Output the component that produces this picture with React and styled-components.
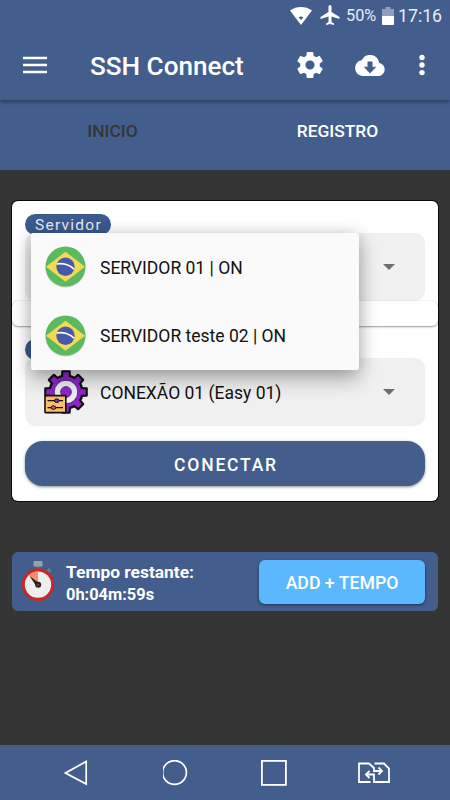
import React from "react";
import styled, { createGlobalStyle } from "styled-components";

const blue = "#435d8d";

const GlobalStyle = createGlobalStyle`
  * { box-sizing: border-box; }
  body { margin: 0; background: #353535; font-family: Roboto, sans-serif; }
  svg { display: block; flex: none; }
`;

const Screen = styled.div`
  width: 450px;
  height: 800px;
  display: flex;
  flex-direction: column;
  background: #353535;
  overflow: hidden;
`;

const StatusBar = styled.div`
  height: 32px;
  display: flex;
  align-items: center;
  justify-content: flex-end;
  padding-right: 8px;
  background: ${blue};
  color: #e8ecf4;
  position: relative;
  z-index: 2;
`;

const StatusText = styled.span`
  width: ${(p) => p.$width}px;
  margin-left: ${(p) => p.$gap}px;
  font-size: ${(p) => p.$size}px;
  line-height: 32px;
  white-space: nowrap;
`;

const StatusIcon = styled.svg`
  margin-left: ${(p) => p.$gap}px;
  margin-top: ${(p) => p.$drop || 0}px;
`;

const Toolbar = styled.header`
  height: 68px;
  display: flex;
  align-items: center;
  padding: 0 25px 0 23px;
  background: ${blue};
  box-shadow: 0 1px 4px rgba(0, 0, 0, 0.5);
  position: relative;
  z-index: 1;
`;

const MenuIcon = styled.svg`
  margin-top: -3px;
`;

const Title = styled.h1`
  flex: 1;
  margin: 0 0 0 43px;
  font-size: 26.1px;
  line-height: 68px;
  font-weight: 500;
  color: #fff;
  white-space: nowrap;
`;

const Actions = styled.div`
  display: flex;
  align-items: center;
  margin-top: -2px;
`;

const ActionIcon = styled.svg`
  margin-left: ${(p) => p.$gap || 0}px;
`;

const Tabs = styled.nav`
  height: 70px;
  display: grid;
  grid-template-columns: 1fr 1fr;
  background: ${blue};
`;

const Tab = styled.div`
  padding-top: 1px;
  text-align: center;
  font-size: 17.4px;
  line-height: 60px;
  font-weight: 500;
  color: ${(p) => (p.$active ? "#353535" : "#fff")};
`;

const Content = styled.main`
  flex: 1;
  padding: 31px 12px 0;
`;

const Card = styled.section`
  position: relative;
  height: 300px;
  border-radius: 6px;
  background: #fff;
  box-shadow: 0 0 0 1px #0a0a0a;
  padding-top: 13px;
`;

const Badge = styled.div`
  width: 86px;
  height: 21px;
  margin-left: 13px;
  border-radius: 11px;
  background: #3b5a8e;
  color: #e9edf5;
  font-size: 15.5px;
  line-height: 22px;
  letter-spacing: 1.25px;
  padding-left: 10px;
`;

const Field = styled.div`
  height: 68px;
  margin: -2px 13px 0;
  border-radius: 10px;
  background: #f0f0f0;
  display: flex;
  align-items: center;
  justify-content: flex-end;
  padding: 0 30px 0 19px;
`;

const FieldText = styled.span`
  flex: 1;
  margin-left: 12px;
  padding-top: 1px;
  font-size: 17.5px;
  color: #111;
  white-space: nowrap;
`;

const Strip = styled.div`
  height: 25px;
  margin: 0 0 13px;
  border-radius: 6px;
  background: #fff;
  box-shadow: 0 1px 2px rgba(0, 0, 0, 0.38), 0 0 1px rgba(0, 0, 0, 0.25);
`;

const ConnectButton = styled.button`
  display: block;
  width: 400px;
  height: 45px;
  margin: 15px 13px 0;
  padding: 2px 0 0 2px;
  border: 0;
  border-radius: 18px;
  background: ${blue};
  box-shadow: 0 1px 3px rgba(0, 0, 0, 0.45);
  color: #fff;
  font: 500 17.5px Roboto, sans-serif;
  letter-spacing: 1.8px;
`;

const Menu = styled.div`
  position: absolute;
  top: 32px;
  left: 19px;
  width: 328px;
  height: 137px;
  border-radius: 2px;
  background: #fafafa;
  box-shadow: 0 10px 20px rgba(0, 0, 0, 0.27), 0 0 15px rgba(0, 0, 0, 0.16);
`;

const MenuItem = styled.div`
  height: 68.5px;
  display: flex;
  align-items: center;
  padding-left: 14px;
`;

const MenuText = styled.span`
  margin-left: 14px;
  font-size: 17.5px;
  padding-top: 1px;
  color: #111;
  white-space: nowrap;
`;

const TimePanel = styled.section`
  height: 59px;
  margin-top: 51px;
  border-radius: 6px;
  background: ${blue};
  display: flex;
  align-items: center;
  padding: 0 13px 0 9px;
`;

const TimeText = styled.div`
  flex: 1;
  margin-left: 11px;
  padding-top: 3px;
  color: #fff;
  font-size: 17.4px;
  line-height: 23px;
  font-weight: 700;
`;

const TimeValue = styled.div`
  font-size: 16.4px;
  line-height: 22px;
`;

const AddButton = styled.button`
  width: 166px;
  height: 44px;
  padding: 2px 0 0;
  border: 0;
  border-radius: 6px;
  background: #5bb8ff;
  box-shadow: 0 1px 3px rgba(0, 0, 0, 0.5);
  color: #fff;
  font: 500 17.7px Roboto, sans-serif;
`;

const NavBar = styled.footer`
  height: 55px;
  display: flex;
  align-items: center;
  padding-left: 64px;
  background: ${blue};
`;

const NavIcon = styled.svg`
  margin-right: ${(p) => p.$gap || 0}px;
`;

const BrazilFlag = () => (
  <svg width="41" height="42" viewBox="0 0 41 42">
    <circle cx="20.5" cy="21.6" r="20" fill="#cbd3cc" />
    <circle cx="20.5" cy="20.6" r="20" fill="#5aba5e" />
    <path d="M1 20.8 20.5 5.8 40 20.8 20.5 35.8Z" fill="#f6d858" />
    <circle cx="20.5" cy="20.8" r="9.2" fill="#4759a9" />
    <path d="M12 18C18 16.8 25 18.8 29 23.3" fill="none" stroke="#fff" strokeWidth="1.7" />
  </svg>
);

const TEETH = [0, 45, 90, 135, 180, 225, 270, 315];

const ConnectionGear = () => (
  <svg width="44" height="44" viewBox="0 0 44 44">
    <g stroke="#101010" strokeWidth="2.4" strokeLinejoin="round" fill="#9124cf">
      {TEETH.map((a) => (
        <path key={a} d="M18.1 7 18.5 1.4H25.5L25.9 7Z" transform={`rotate(${a} 22 22)`} />
      ))}
      <circle cx="22" cy="22" r="16.4" />
    </g>
    <g fill="#9124cf">
      {TEETH.map((a) => (
        <path key={a} d="M18.9 9 19.4 2.4H24.6L25.1 9Z" transform={`rotate(${a} 22 22)`} />
      ))}
    </g>
    <circle cx="22" cy="22" r="11.8" fill="#ececf4" stroke="#3b1455" strokeWidth="0.8" />
    <circle cx="22" cy="22" r="5.4" fill="#9124cf" stroke="#3b1455" strokeWidth="0.7" />
    <rect x="1" y="25.6" width="20.8" height="17" rx="0.6" fill="#f9bf69" stroke="#101010" strokeWidth="1.6" />
    <path d="M3.5 30.7H19M3.5 37.6H19" stroke="#101010" strokeWidth="1.3" />
    <ellipse cx="12.8" cy="30.7" rx="2.4" ry="1.8" fill="#9124cf" stroke="#101010" strokeWidth="1" />
    <ellipse cx="9.4" cy="37.6" rx="2.4" ry="1.8" fill="#ed5437" stroke="#101010" strokeWidth="1" />
  </svg>
);

const Caret = () => (
  <svg width="12" height="6" viewBox="0 0 12 6">
    <path d="M0 0H12L6 6Z" fill="#6e6e6e" />
  </svg>
);

const Stopwatch = () => (
  <svg width="34" height="44" viewBox="0 0 34 44">
    <rect x="14.5" y="4" width="5" height="6" fill="#546f7a" />
    <rect x="12.5" y="1" width="9" height="5.5" rx="0.8" fill="#90a4ae" />
    <path d="m25.3 10.2 2.4-2.5 3 2.9-2.4 2.4Z" fill="#607d8b" />
    <circle cx="17" cy="24.6" r="16.3" fill="#c62828" />
    <circle cx="17" cy="24.6" r="13.2" fill="#eee" />
    <path d="M17 24.6 7.7 15.3A13.2 13.2 0 0 1 17 11.4Z" fill="#ff8a65" />
    <path d="m8.5 16.1 7.1 10.4 2.9-2.9Z" fill="#222" />
    <circle cx="17.2" cy="24.8" r="3" fill="#222" />
    <circle cx="17.2" cy="24.8" r="1" fill="#c62828" />
  </svg>
);

export default function App() {
  return (
    <Screen>
      <GlobalStyle />
      <StatusBar>
        <StatusIcon $drop={-1} width="22" height="18" viewBox="0 0 22 18">
          <path d="M0 3.4C6.5-1.1 15.5-1.1 22 3.4L11 18Z" fill="#fff" />
          <path d="M8.5 10.2Q11 8.8 13.5 10.2L11 13Z" fill={blue} />
        </StatusIcon>
        <StatusIcon $gap={8} $drop={-2} width="20" height="20" viewBox="2 2 20 20">
          <path d="M21.5 16v-2l-8-5V3.5a1.5 1.5 0 0 0-3 0V9l-8 5v2l8-2.5V19l-2.5 1.5V22l4-1 4 1v-1.5L13.5 19v-5.5Z" fill="#fff" />
        </StatusIcon>
        <StatusText $gap={6} $size={16.3} $width={31}>50%</StatusText>
        <StatusIcon $gap={5} $drop={-1} width="12" height="18" viewBox="0 0 12 18">
          <path d="M3.5 0H8.5V2H12V9H0V2H3.5Z" fill="#8d9dba" />
          <path d="M0 9H12V17Q12 18 11 18H1Q0 18 0 17Z" fill="#fff" />
        </StatusIcon>
        <StatusText $gap={4} $size={17.7} $width={44}>17:16</StatusText>
      </StatusBar>
      <Toolbar>
        <MenuIcon width="24" height="18" viewBox="0 0 24 18">
          <path d="M0 2H24M0 9H24M0 16H24" stroke="#fff" strokeWidth="2.4" />
        </MenuIcon>
        <Title>SSH Connect</Title>
        <Actions>
          <ActionIcon width="26" height="26" viewBox="2 2 20 20">
            <path fill="#fff" d="M19.43 12.98c.04-.32.07-.64.07-.98s-.03-.66-.07-.98l2.11-1.65c.19-.15.24-.42.12-.64l-2-3.46c-.12-.22-.39-.3-.61-.22l-2.49 1c-.52-.4-1.08-.73-1.69-.98l-.38-2.65A.49.49 0 0 0 14 2h-4c-.25 0-.46.18-.49.42l-.38 2.65c-.61.25-1.17.59-1.69.98l-2.49-1c-.23-.09-.49 0-.61.22l-2 3.46c-.13.22-.07.49.12.64l2.11 1.65c-.04.32-.07.65-.07.98s.03.66.07.98l-2.11 1.65c-.19.15-.24.42-.12.64l2 3.46c.12.22.39.3.61.22l2.49-1c.52.4 1.08.73 1.69.98l.38 2.65c.03.24.24.42.49.42h4c.25 0 .46-.18.49-.42l.38-2.65c.61-.25 1.17-.59 1.69-.98l2.49 1c.23.09.49 0 .61-.22l2-3.46c.12-.22.07-.49-.12-.64ZM12 15.5a3.5 3.5 0 1 1 0-7 3.5 3.5 0 0 1 0 7Z" />
          </ActionIcon>
          <ActionIcon $gap={32} width="30" height="21" viewBox="0 4 24 16" preserveAspectRatio="none">
            <path fill="#fff" d="M19.35 10.04A7.49 7.49 0 0 0 5.35 8.04 6 6 0 0 0 6 20h13a5 5 0 0 0 .35-9.96ZM17 13l-5 5-5-5h3V9h4v4Z" />
          </ActionIcon>
          <ActionIcon $gap={34.5} width="6" height="22" viewBox="0 0 6 22">
            <circle cx="3" cy="3.5" r="2.7" fill="#fff" />
            <circle cx="3" cy="11" r="2.7" fill="#fff" />
            <circle cx="3" cy="18.6" r="2.7" fill="#fff" />
          </ActionIcon>
        </Actions>
      </Toolbar>
      <Tabs>
        <Tab $active>INICIO</Tab>
        <Tab>REGISTRO</Tab>
      </Tabs>
      <Content>
        <Card>
          <Badge>Servidor</Badge>
          <Field>
            <Caret />
          </Field>
          <Strip />
          <Badge />
          <Field>
            <ConnectionGear />
            <FieldText>CONEXÃO 01 (Easy 01)</FieldText>
            <Caret />
          </Field>
          <ConnectButton>CONECTAR</ConnectButton>
          <Menu>
            <MenuItem>
              <BrazilFlag />
              <MenuText>SERVIDOR 01 | ON</MenuText>
            </MenuItem>
            <MenuItem>
              <BrazilFlag />
              <MenuText>SERVIDOR teste 02 | ON</MenuText>
            </MenuItem>
          </Menu>
        </Card>
        <TimePanel>
          <Stopwatch />
          <TimeText>
            Tempo restante:
            <TimeValue>0h:04m:59s</TimeValue>
          </TimeText>
          <AddButton>ADD + TEMPO</AddButton>
        </TimePanel>
      </Content>
      <NavBar>
        <NavIcon $gap={75} width="24" height="26" viewBox="0 0 24 26">
          <path d="M22.2 1.5V24L1.5 13Z" fill="none" stroke="#fff" strokeWidth="1.7" />
        </NavIcon>
        <NavIcon $gap={72} width="26" height="26" viewBox="0.5 0.5 26 26">
          <circle cx="12" cy="13" r="11.9" fill="none" stroke="#fff" strokeWidth="1.7" />
        </NavIcon>
        <NavIcon $gap={71} width="26" height="26" viewBox="0 0 26 26">
          <rect x="0.9" y="0.9" width="24" height="24" fill="none" stroke="#fff" strokeWidth="1.8" />
        </NavIcon>
        <NavIcon width="32" height="22" viewBox="0 0 32 22">
          <g fill="none" stroke="#fff" strokeWidth="1.8">
            <path d="M12.5 20H1V1.5H11L16 6V9H23M16.5 1.5H26L31 6.5V20H16V12.5H8.5" />
            <path d="m20.5 5.5 3.5 3.5-3.5 3.5M11.5 9 8 12.5l3.5 3.5" />
          </g>
        </NavIcon>
      </NavBar>
    </Screen>
  );
}
